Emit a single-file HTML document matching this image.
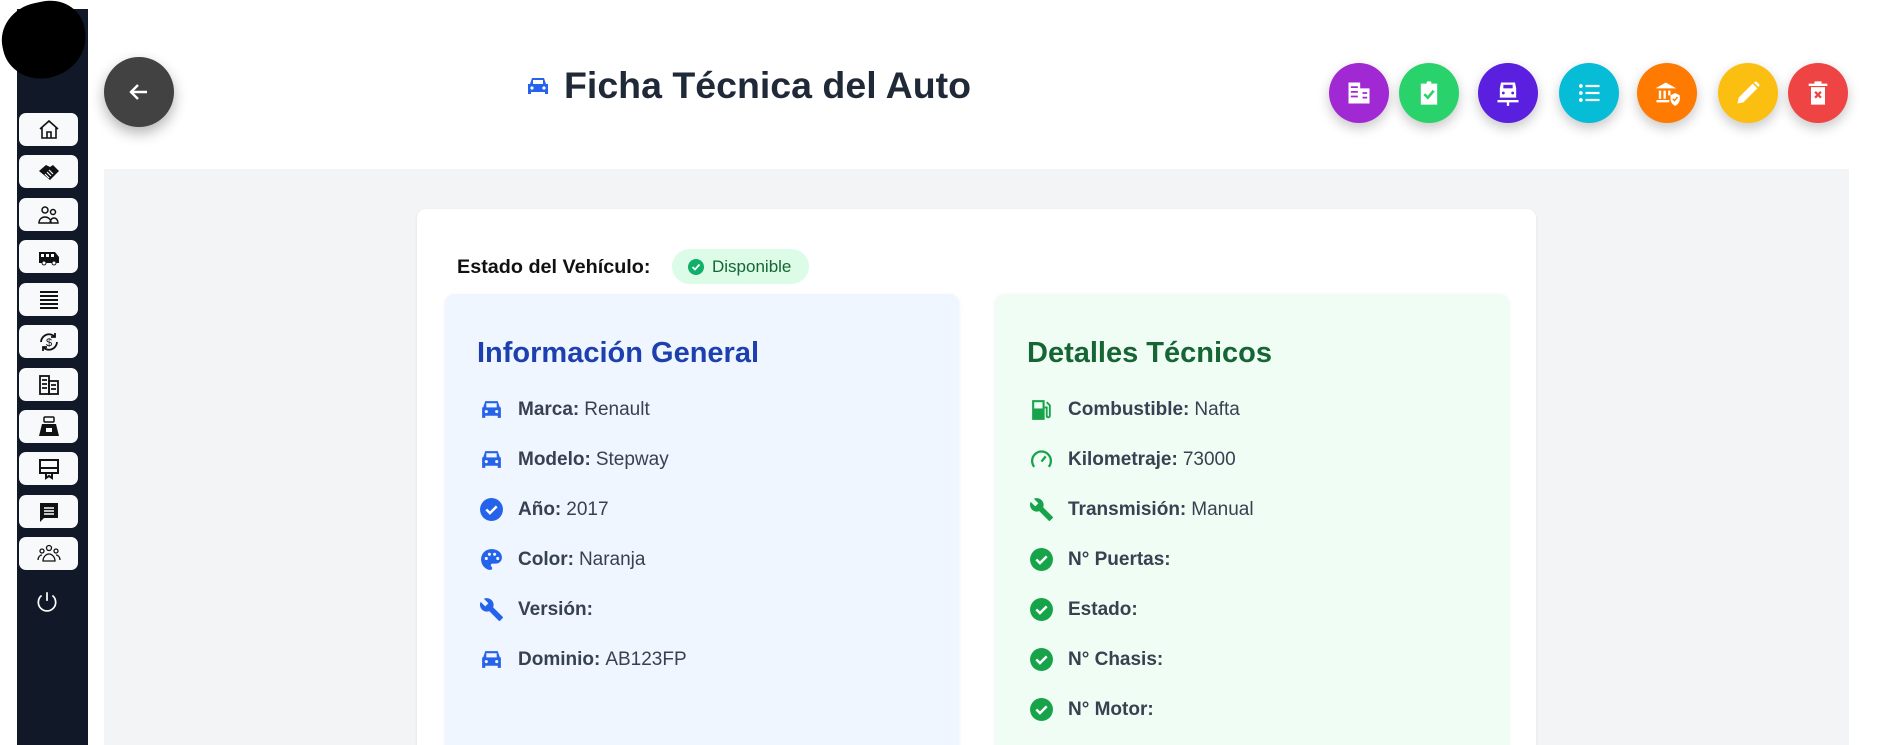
<!DOCTYPE html>
<html><head><meta charset="utf-8"><style>
*{box-sizing:border-box;margin:0;padding:0}
html,body{width:1877px;height:745px;overflow:hidden}
body{background:#fff;font-family:"Liberation Sans",Arial,sans-serif;color:#374151}
#wrap{position:relative;width:1877px;height:745px;overflow:hidden}
.sb{position:absolute;left:17px;top:9px;width:71px;height:736px;background:#111827}
.blob{position:absolute;left:2px;top:2px;width:84px;height:76px;border-radius:50% 45% 55% 50%;background:#000;transform:rotate(-12deg)}
.nb{position:absolute;left:19px;width:59px;height:33px;background:#f8f9fb;border-radius:7px;display:flex;align-items:center;justify-content:center}
.nb svg{width:24px;height:24px}
.back{position:absolute;left:104px;top:57px;width:70px;height:70px;border-radius:50%;background:#424242;box-shadow:0 6px 14px rgba(0,0,0,.3);display:flex;align-items:center;justify-content:center}
.title{position:absolute;left:526px;top:64px;font-size:37.5px;font-weight:bold;color:#1f2937;display:flex;align-items:center;gap:14px}
.ab{position:absolute;top:63px;width:60px;height:60px;border-radius:50%;box-shadow:0 5px 12px rgba(0,0,0,.22);display:flex;align-items:center;justify-content:center}
.ab svg{width:28px;height:28px;fill:#fff}
.gray{position:absolute;left:104px;top:169px;width:1745px;height:576px;background:#f3f4f6}
.card{position:absolute;left:417px;top:209px;width:1119px;height:560px;background:#fff;border-radius:9px;box-shadow:0 1px 3px rgba(0,0,0,.08)}
.est{position:absolute;left:457px;top:256px;font-size:19.8px;font-weight:bold;color:#111}
.badge{position:absolute;left:672px;top:249px;width:137px;height:35px;border-radius:18px;background:#dcfce7;color:#166534;font-size:17px;display:flex;align-items:center;padding-left:16px;gap:8px}
.panel{position:absolute;top:294px;width:514px;height:470px;border-radius:10px;box-shadow:0 1px 4px rgba(0,0,0,.07)}
.panel h2{position:absolute;left:32px;top:43px;font-size:29px;font-weight:bold}
.row{position:absolute;left:34px;display:flex;align-items:center;font-size:19px;color:#374151;margin-top:1px}
.row svg{width:25px;height:25px;margin-right:14px}
.row b{margin-right:5px}
</style></head><body><div id="wrap">
<div class="sb"></div>
<div class="blob"></div>
<div class="nb" style="top:113px"><svg viewBox="0 0 24 24" fill="none" stroke="#111" stroke-width="1.6"><path d="M3 11L12 3l9 8M5 9v11h14V9M10 20v-6h4v6"/></svg></div>
<div class="nb" style="top:155px"><svg viewBox="0 0 24 24"><path d="M2 11l7-6 4 2 3-2 6 6-9 9z" fill="#111"/><path d="M8 14l4 4M10 12l4 4M12 10l4 4" stroke="#fff" stroke-width="1.2"/></svg></div>
<div class="nb" style="top:198px"><svg viewBox="0 0 24 24" fill="none" stroke="#111" stroke-width="1.5"><circle cx="8" cy="7" r="3"/><circle cx="16" cy="9" r="2.5"/><path d="M2 20c0-4 3-6 6-6s6 2 6 6zM13 20c0-3 2-5 4-5s4 2 4 5z"/></svg></div>
<div class="nb" style="top:240px"><svg viewBox="0 0 24 24"><path d="M2 7h16l4 5v6H2z" fill="#111"/><rect x="4" y="9" width="3" height="3" fill="#fff"/><rect x="9" y="9" width="3" height="3" fill="#fff"/><rect x="14" y="9" width="3" height="3" fill="#fff"/><circle cx="7" cy="18" r="2" fill="#fff" stroke="#111"/><circle cx="17" cy="18" r="2" fill="#fff" stroke="#111"/></svg></div>
<div class="nb" style="top:283px"><svg viewBox="0 0 24 24" stroke="#111" stroke-width="2"><path d="M3 4h18M3 8h18M3 12h18M3 16h18M3 20h18"/></svg></div>
<div class="nb" style="top:325px"><svg viewBox="0 0 24 24" fill="none" stroke="#111" stroke-width="1.8"><path d="M4 12a8 8 0 0 1 14-5M20 12a8 8 0 0 1-14 5"/><path d="M18 3v4h-4M6 21v-4h4"/><text x="12" y="16" font-size="11" text-anchor="middle" fill="#111" stroke="none" font-family="Liberation Sans">$</text></svg></div>
<div class="nb" style="top:368px"><svg viewBox="0 0 24 24" fill="none" stroke="#111" stroke-width="1.8"><rect x="3" y="3" width="9" height="18"/><rect x="12" y="8" width="9" height="13"/><path d="M5 7h5M5 11h5M5 15h5M14 12h5M14 16h5"/></svg></div>
<div class="nb" style="top:410px"><svg viewBox="0 0 24 24"><rect x="7" y="2" width="10" height="5" rx="1" fill="none" stroke="#111" stroke-width="1.5"/><path d="M5 9h14l3 12H2z" fill="#111"/><rect x="9" y="13" width="6" height="4" fill="#fff"/></svg></div>
<div class="nb" style="top:452px"><svg viewBox="0 0 24 24" fill="none" stroke="#111" stroke-width="2"><rect x="3" y="3" width="18" height="13"/><path d="M3 11h18M9 16v5l3-2 3 2v-5"/></svg></div>
<div class="nb" style="top:495px"><svg viewBox="0 0 24 24"><path d="M3 3h18v15H7l-4 4z" fill="#111"/><path d="M7 8h10M7 11h10M7 14h10" stroke="#fff" stroke-width="1.5"/></svg></div>
<div class="nb" style="top:537px"><svg viewBox="0 0 24 24" fill="none" stroke="#111" stroke-width="1.3"><circle cx="12" cy="6" r="2.5"/><circle cx="5" cy="9" r="2"/><circle cx="19" cy="9" r="2"/><path d="M6 19c0-4 3-7 6-7s6 3 6 7zM1 18c0-3 2-5 4-5M23 18c0-3-2-5-4-5"/></svg></div>
<svg style="position:absolute;left:34px;top:589px" width="26" height="26" viewBox="0 0 24 24" fill="none" stroke="#fff" stroke-width="1.6"><path d="M12 3v8M7 6a8 8 0 1 0 10 0"/></svg>

<div class="back"><svg width="24" height="24" viewBox="0 0 24 24" fill="none" stroke="#fff" stroke-width="2.4"><path d="M20 12H5M11 5l-7 7 7 7"/></svg></div>

<div class="title"><svg width="24" height="20" viewBox="0 0 24 20"><path d="M4 8l2-6h12l2 6h2v10h-3v-2H5v2H2V8z" fill="#2563eb"/><rect x="7" y="4" width="10" height="4" fill="#fff"/><circle cx="6" cy="12" r="1.6" fill="#fff"/><circle cx="18" cy="12" r="1.6" fill="#fff"/></svg>Ficha Técnica del Auto</div>

<div class="ab" style="left:1329px;background:#a129d3"><svg viewBox="0 0 24 24"><path d="M3 3h10v18H3zM13 8h8v13h-8z"/><path d="M5 7h6M5 11h6M5 15h6M15 12h4M15 16h4" stroke="#a129d3" stroke-width="1.5"/></svg></div>
<div class="ab" style="left:1399px;background:#2ad26c"><svg viewBox="0 0 24 24"><path d="M5 4h14v18H5z"/><rect x="10" y="2" width="4" height="4" rx="1"/><path d="M8 13l3 3 5-6" stroke="#2ad26c" stroke-width="2.2" fill="none"/></svg></div>
<div class="ab" style="left:1478px;background:#5b1fe0"><svg viewBox="0 0 24 24"><path d="M6 3h12l1 5v8H5V8z"/><rect x="8" y="5" width="8" height="3" fill="#5b1fe0"/><circle cx="8" cy="12" r="1.2" fill="#5b1fe0"/><circle cx="16" cy="12" r="1.2" fill="#5b1fe0"/><path d="M3 18h18v2H3zM11 20h2v3h-2z"/></svg></div>
<div class="ab" style="left:1559px;background:#06bcd6"><svg viewBox="0 0 24 24"><circle cx="5" cy="6" r="1.6"/><circle cx="5" cy="12" r="1.6"/><circle cx="5" cy="18" r="1.6"/><path d="M9 5h12v2H9zM9 11h12v2H9zM9 17h12v2H9z"/></svg></div>
<div class="ab" style="left:1637px;background:#ff7a00"><svg viewBox="0 0 24 24"><path d="M2 8l9-5 9 5z"/><path d="M5 10h2v7H5zM9 10h2v7H9zM13 10h2v4h-2zM3 18h11v2H3z"/><path d="M15 14l4-2 4 2v3c0 3-2 5-4 6-2-1-4-3-4-6z"/><path d="M17 17l1.5 1.5 2.5-3" stroke="#ff7a00" stroke-width="1.2" fill="none"/></svg></div>
<div class="ab" style="left:1718px;background:#fbbf12"><svg viewBox="0 0 24 24"><path d="M3 21l1-5L16 4l4 4L8 20zM17 3l2-1 3 3-1 2z"/></svg></div>
<div class="ab" style="left:1788px;background:#ef4444"><svg viewBox="0 0 24 24"><path d="M4 4h16v2H4zM9 2h6v2H9zM6 7h12v15H6z"/><path d="M9.5 11l5 5M14.5 11l-5 5" stroke="#ef4444" stroke-width="2"/></svg></div>

<div class="gray"></div>
<div class="card"></div>
<div class="est">Estado del Vehículo:</div>
<div class="badge"><svg width="16" height="16" viewBox="0 0 16 16"><circle cx="8" cy="8" r="8" fill="#10b068"/><path d="M4.5 8l2.5 2.5 4.5-5" stroke="#fff" stroke-width="1.8" fill="none"/></svg>Disponible</div>

<div class="panel" style="left:445px;background:#eff6ff">
<h2 style="color:#1e40af">Información General</h2>
<div class="row" style="top:102px"><svg viewBox="0 0 24 24"><path d="M4 10l2-6h12l2 6h1v10h-3v-2H6v2H3V10z" fill="#2563eb"/><rect x="7" y="6" width="10" height="4" fill="#eff6ff"/><circle cx="7" cy="14" r="1.5" fill="#eff6ff"/><circle cx="17" cy="14" r="1.5" fill="#eff6ff"/></svg><b>Marca:</b>Renault</div>
<div class="row" style="top:152px"><svg viewBox="0 0 24 24"><path d="M4 10l2-6h12l2 6h1v10h-3v-2H6v2H3V10z" fill="#2563eb"/><rect x="7" y="6" width="10" height="4" fill="#eff6ff"/><circle cx="7" cy="14" r="1.5" fill="#eff6ff"/><circle cx="17" cy="14" r="1.5" fill="#eff6ff"/></svg><b>Modelo:</b>Stepway</div>
<div class="row" style="top:202px"><svg viewBox="0 0 24 24"><circle cx="12" cy="12" r="11" fill="#2563eb"/><path d="M7 12l3.5 3.5L17 9" stroke="#fff" stroke-width="2.4" fill="none"/></svg><b>Año:</b>2017</div>
<div class="row" style="top:252px"><svg viewBox="0 0 24 24"><path d="M12 2C6 2 2 6.5 2 12s4.5 10 9 10c2 0 2-2 1-3s-1-3 1-3h3c3 0 6-2 6-6 0-4.5-4-8-10-8z" fill="#2563eb"/><circle cx="7" cy="11" r="1.5" fill="#eff6ff"/><circle cx="10" cy="7" r="1.5" fill="#eff6ff"/><circle cx="15" cy="7" r="1.5" fill="#eff6ff"/><circle cx="18" cy="11" r="1.5" fill="#eff6ff"/></svg><b>Color:</b>Naranja</div>
<div class="row" style="top:302px"><svg viewBox="0 0 24 24"><path d="M22.7 19l-9.1-9.1c.9-2.3.4-5-1.5-6.9-2-2-5-2.4-7.4-1.3L9 6 6 9 1.6 4.7C.4 7.1.9 10.1 2.9 12.1c1.9 1.9 4.6 2.4 6.9 1.5l9.1 9.1c.4.4 1 .4 1.4 0l2.3-2.3c.5-.4.5-1.1.1-1.4z" fill="#2563eb"/></svg><b>Versión:</b></div>
<div class="row" style="top:352px"><svg viewBox="0 0 24 24"><path d="M4 10l2-6h12l2 6h1v10h-3v-2H6v2H3V10z" fill="#2563eb"/><rect x="7" y="6" width="10" height="4" fill="#eff6ff"/><circle cx="7" cy="14" r="1.5" fill="#eff6ff"/><circle cx="17" cy="14" r="1.5" fill="#eff6ff"/></svg><b>Dominio:</b>AB123FP</div>
</div>

<div class="panel" style="left:995px;background:#f0fdf4">
<h2 style="color:#166534">Detalles Técnicos</h2>
<div class="row" style="top:102px"><svg viewBox="0 0 24 24"><path d="M3 3h12v19H3z" fill="#16a34a"/><rect x="5" y="5" width="8" height="6" fill="#f0fdf4"/><path d="M15 10h2v8c0 2 3 2 3 0V8l-3-3" stroke="#16a34a" stroke-width="1.8" fill="none"/></svg><b>Combustible:</b>Nafta</div>
<div class="row" style="top:152px"><svg viewBox="0 0 24 24" fill="none" stroke="#16a34a" stroke-width="2.2"><path d="M5 19a9 9 0 1 1 14 0"/><path d="M12 14l4-5"/></svg><b>Kilometraje:</b>73000</div>
<div class="row" style="top:202px"><svg viewBox="0 0 24 24"><path d="M22.7 19l-9.1-9.1c.9-2.3.4-5-1.5-6.9-2-2-5-2.4-7.4-1.3L9 6 6 9 1.6 4.7C.4 7.1.9 10.1 2.9 12.1c1.9 1.9 4.6 2.4 6.9 1.5l9.1 9.1c.4.4 1 .4 1.4 0l2.3-2.3c.5-.4.5-1.1.1-1.4z" fill="#16a34a"/></svg><b>Transmisión:</b>Manual</div>
<div class="row" style="top:252px"><svg viewBox="0 0 24 24"><circle cx="12" cy="12" r="11" fill="#16a34a"/><path d="M7 12l3.5 3.5L17 9" stroke="#fff" stroke-width="2.4" fill="none"/></svg><b>N° Puertas:</b></div>
<div class="row" style="top:302px"><svg viewBox="0 0 24 24"><circle cx="12" cy="12" r="11" fill="#16a34a"/><path d="M7 12l3.5 3.5L17 9" stroke="#fff" stroke-width="2.4" fill="none"/></svg><b>Estado:</b></div>
<div class="row" style="top:352px"><svg viewBox="0 0 24 24"><circle cx="12" cy="12" r="11" fill="#16a34a"/><path d="M7 12l3.5 3.5L17 9" stroke="#fff" stroke-width="2.4" fill="none"/></svg><b>N° Chasis:</b></div>
<div class="row" style="top:402px"><svg viewBox="0 0 24 24"><circle cx="12" cy="12" r="11" fill="#16a34a"/><path d="M7 12l3.5 3.5L17 9" stroke="#fff" stroke-width="2.4" fill="none"/></svg><b>N° Motor:</b></div>
</div>
</div></body></html>
